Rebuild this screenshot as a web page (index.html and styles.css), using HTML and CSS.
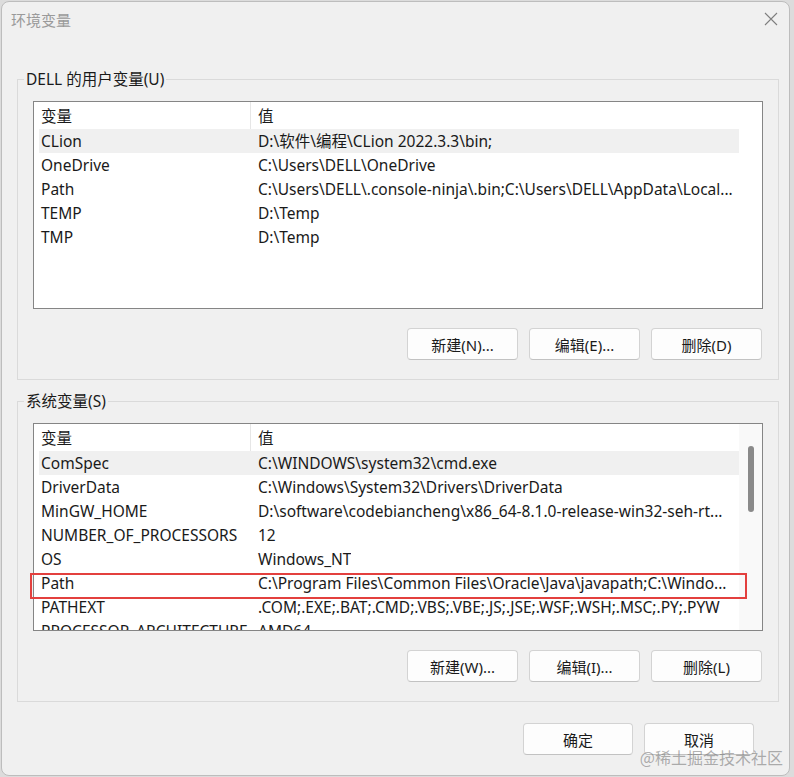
FILE: index.html
```html
<!DOCTYPE html>
<html lang="zh-CN">
<head>
  <meta charset="UTF-8" />
  <title>环境变量</title>
  <link rel="stylesheet" href="styles.css">
</head>
<body>
  <div class="window">
    <div class="titlebar">
      <span class="title">环境变量</span>
      <svg class="close" width="14" height="14" viewBox="0 0 14 14">
        <path d="M1 1L13 13M13 1L1 13" stroke="#7f7f7f" stroke-width="1.1" fill="none"/>
      </svg>
    </div>

    <div class="content">
      <fieldset class="group">
        <legend>DELL 的用户变量(U)</legend>
        <div class="group-body">
          <div class="listbox">
            <div class="list-body">
              <div class="row head"><span class="name">变量</span><span class="value">值</span></div>
              <div class="row selected"><span class="name">CLion</span><span class="value">D:\软件\编程\CLion 2022.3.3\bin;</span></div>
              <div class="row"><span class="name">OneDrive</span><span class="value">C:\Users\DELL\OneDrive</span></div>
              <div class="row"><span class="name">Path</span><span class="value">C:\Users\DELL\.console-ninja\.bin;C:\Users\DELL\AppData\Local...</span></div>
              <div class="row"><span class="name">TEMP</span><span class="value">D:\Temp</span></div>
              <div class="row"><span class="name">TMP</span><span class="value">D:\Temp</span></div>
            </div>
            <div class="scroll-col"></div>
          </div>
          <div class="actions">
            <button>新建(N)...</button>
            <button>编辑(E)...</button>
            <button>删除(D)</button>
          </div>
        </div>
      </fieldset>

      <fieldset class="group">
        <legend>系统变量(S)</legend>
        <div class="group-body">
          <div class="listbox">
            <div class="list-body">
              <div class="row head"><span class="name">变量</span><span class="value">值</span></div>
              <div class="row selected"><span class="name">ComSpec</span><span class="value">C:\WINDOWS\system32\cmd.exe</span></div>
              <div class="row"><span class="name">DriverData</span><span class="value">C:\Windows\System32\Drivers\DriverData</span></div>
              <div class="row"><span class="name">MinGW_HOME</span><span class="value">D:\software\codebiancheng\x86_64-8.1.0-release-win32-seh-rt...</span></div>
              <div class="row"><span class="name">NUMBER_OF_PROCESSORS</span><span class="value">12</span></div>
              <div class="row"><span class="name">OS</span><span class="value">Windows_NT</span></div>
              <div class="row"><span class="name">Path</span><span class="value">C:\Program Files\Common Files\Oracle\Java\javapath;C:\Windo...</span></div>
              <div class="row"><span class="name">PATHEXT</span><span class="value">.COM;.EXE;.BAT;.CMD;.VBS;.VBE;.JS;.JSE;.WSF;.WSH;.MSC;.PY;.PYW</span></div>
              <div class="row"><span class="name">PROCESSOR_ARCHITECTURE</span><span class="value">AMD64</span></div>
            </div>
            <div class="scroll-col track"><div class="thumb"></div></div>
            <div class="highlight"></div>
          </div>
          <div class="actions">
            <button>新建(W)...</button>
            <button>编辑(I)...</button>
            <button>删除(L)</button>
          </div>
        </div>
      </fieldset>
    </div>

    <div class="footer">
      <button class="wide">确定</button>
      <button class="wide">取消</button>
    </div>

    <div class="watermark">@稀土掘金技术社区</div>
  </div>
</body>
</html>
```

FILE: styles.css
```css
body {
  margin: 0;
  background: #dcdcdc;
  font-family: "Noto Sans", "Noto Sans CJK SC", sans-serif;
  font-size: 15.5px;
  color: #1a1a1a;
}
.window {
  position: relative;
  box-sizing: border-box;
  width: 789px;
  height: 775px;
  margin: 1px 0 0 1px;
  background: #f0f0f0;
  border: 1px solid #bdbdbd;
  border-radius: 8px;
  overflow: hidden;
}
.titlebar {
  height: 34px;
  display: flex;
  align-items: center;
  justify-content: space-between;
  padding: 0 11px 0 9px;
}
.title {
  color: #9a9a9a;
  font-family: "Noto Sans CJK SC", sans-serif;
  font-size: 15px;
}
.content {
  padding: 33px 10px 0 15px;
}
.group {
  margin: 0;
  padding: 0;
  min-width: 0;
  border: 1px solid #dadada;
}
.group + .group {
  margin-top: 11px;
}
.group legend {
  margin-left: 6px;
  padding: 0 2px;
  line-height: 20px;
}
.group-body {
  padding: 12px 15px 19px;
}
.listbox {
  position: relative;
  display: flex;
  height: 208px;
  box-sizing: border-box;
  background: #fff;
  border: 1px solid #858585;
}
.list-body {
  flex: 1;
  padding-left: 5px;
  overflow: hidden;
}
.scroll-col {
  width: 23px;
}
.track {
  background: #f9f9f9;
}
.thumb {
  width: 6px;
  height: 66px;
  margin: 22px 0 0 9px;
  background: #8a8a8a;
  border-radius: 3px;
}
.row {
  display: flex;
  height: 24px;
  line-height: 24px;
  white-space: nowrap;
}
.row.head {
  height: 27px;
  line-height: 29px;
}
.row.selected {
  background: #f0f0f0;
}
.name {
  box-sizing: border-box;
  width: 212px;
  flex: none;
  padding-left: 2px;
  overflow: hidden;
}
.head .name {
  border-right: 1px solid #e6e6e6;
}
.value {
  padding-left: 7px;
  overflow: hidden;
}
.highlight {
  position: absolute;
  left: -4px;
  top: 149px;
  width: 717px;
  height: 26px;
  box-sizing: border-box;
  border: 2px solid #e3403e;
}
.actions {
  display: flex;
  justify-content: flex-end;
  gap: 11px;
  margin-top: 19px;
  padding-right: 1px;
}
button {
  width: 111px;
  height: 32px;
  font: inherit;
  font-size: 15px;
  color: #1a1a1a;
  background: #fdfdfd;
  border: 1px solid #d3d3d3;
  border-bottom-color: #c2c2c2;
  border-radius: 4px;
  padding: 0;
}
.footer {
  display: flex;
  justify-content: flex-end;
  gap: 11px;
  margin-top: 21px;
  padding-right: 35px;
}
.footer .wide {
  width: 110px;
}
.watermark {
  position: absolute;
  right: 6px;
  bottom: 6px;
  color: rgba(110, 110, 110, 0.55);
  font-family: "Noto Sans CJK SC", sans-serif;
  font-size: 16px;
}
```
